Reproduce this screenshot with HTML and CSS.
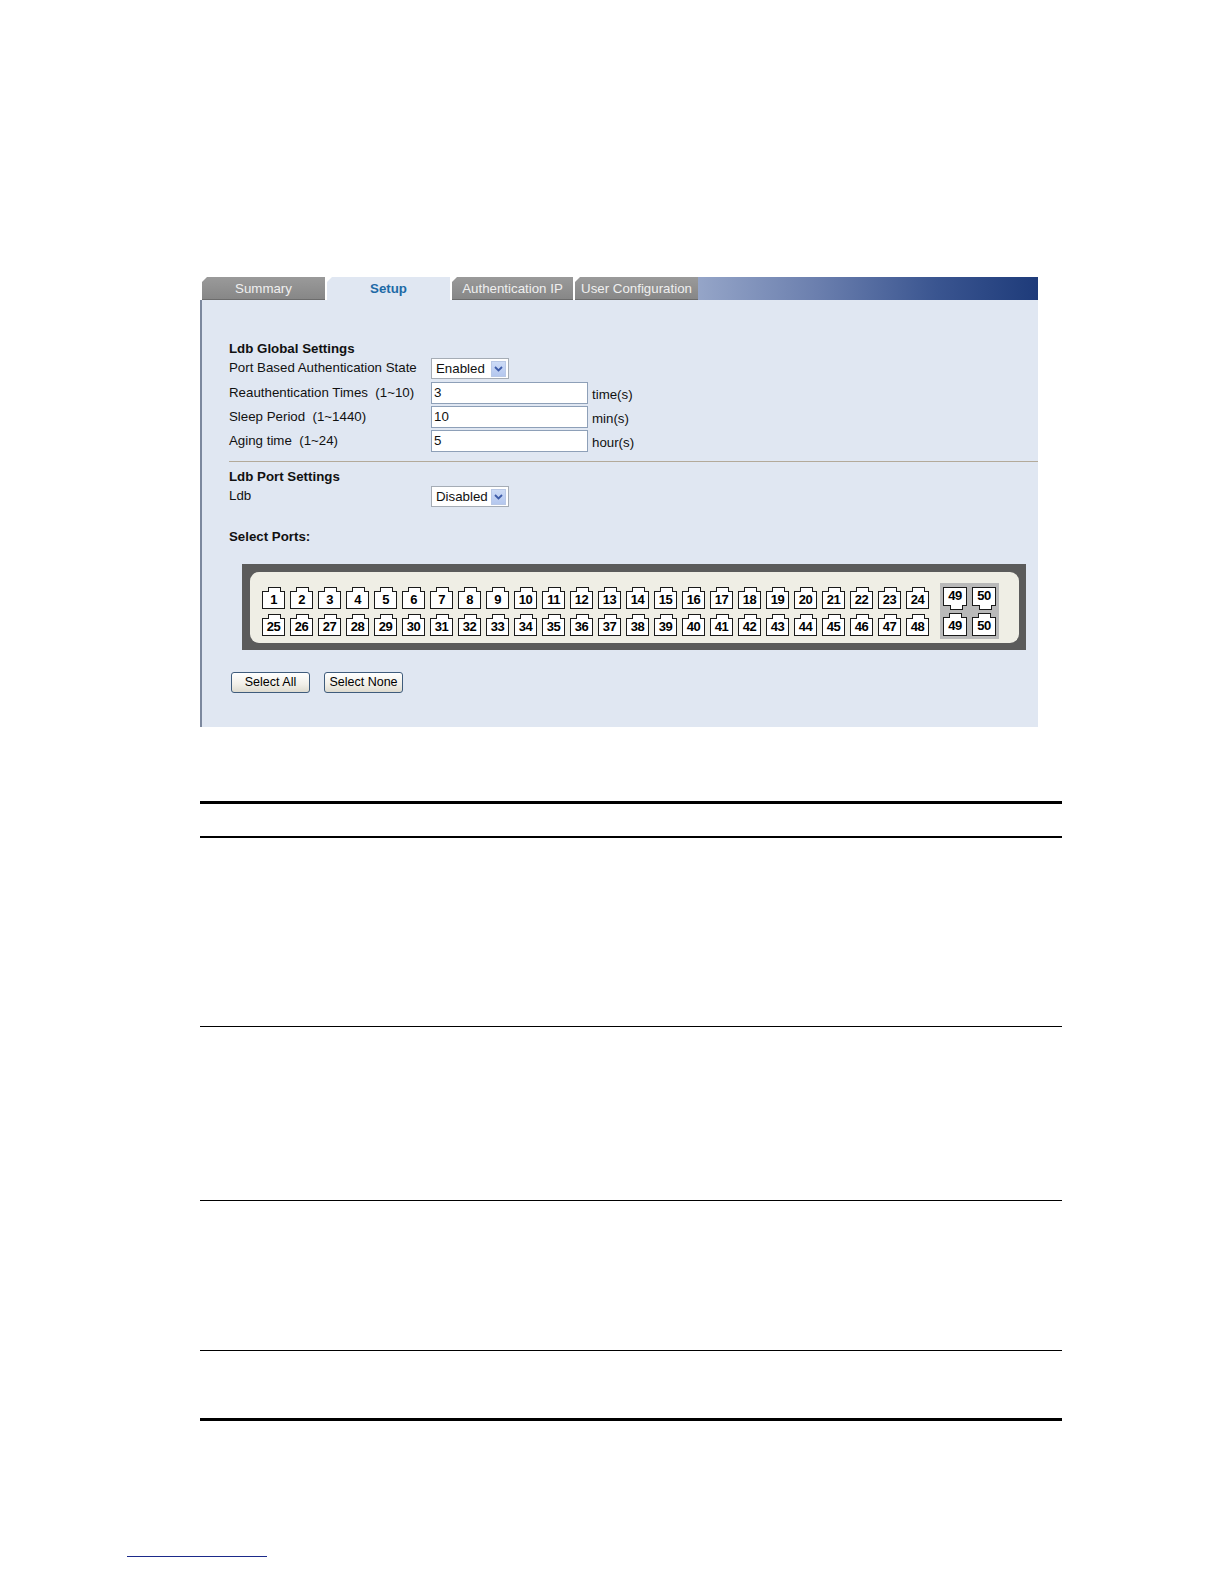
FILE: index.html
```html
<!DOCTYPE html>
<html>
<head>
<meta charset="utf-8">
<title>Ldb Setup</title>
<link rel="stylesheet" href="styles.css">
</head>
<body>
<div class="page">
  <div class="panel">
    <div class="tabbar">
      <div class="tab">Summary</div>
      <div class="tab active">Setup</div>
      <div class="tab">Authentication IP</div>
      <div class="tab">User Configuration</div>
      <div class="tab-fill"></div>
    </div>
    <div class="body">
      <div class="section-title">Ldb Global Settings</div>
      <div class="form">
        <div class="label row-sel">Port Based Authentication State</div>
        <div class="ctrl row-sel"><div class="select"><span class="sel-text">Enabled</span><span class="sel-btn"><svg width="9" height="6" viewBox="0 0 9 6"><path d="M1 1 L4.5 4.5 L8 1" fill="none" stroke="#3d5ba8" stroke-width="1.8"/></svg></span></div></div>
        <div class="unit row-sel"></div>

        <div class="label">Reauthentication Times&nbsp;&nbsp;(1~10)</div>
        <div class="ctrl"><div class="input">3</div></div>
        <div class="unit">time(s)</div>

        <div class="label">Sleep Period&nbsp;&nbsp;(1~1440)</div>
        <div class="ctrl"><div class="input">10</div></div>
        <div class="unit">min(s)</div>

        <div class="label">Aging time&nbsp;&nbsp;(1~24)</div>
        <div class="ctrl"><div class="input">5</div></div>
        <div class="unit">hour(s)</div>
      </div>
      <div class="separator"></div>
      <div class="section-title second">Ldb Port Settings</div>
      <div class="form">
        <div class="label row-sel">Ldb</div>
        <div class="ctrl row-sel"><div class="select"><span class="sel-text">Disabled</span><span class="sel-btn"><svg width="9" height="6" viewBox="0 0 9 6"><path d="M1 1 L4.5 4.5 L8 1" fill="none" stroke="#3d5ba8" stroke-width="1.8"/></svg></span></div></div>
        <div class="unit row-sel"></div>
      </div>
      <div class="section-title third">Select Ports:</div>
      <div class="switch">
        <div class="switch-inner">
          <div class="ports-main">
            <div class="port-row">
              <div class="port">1</div><div class="port">2</div><div class="port">3</div><div class="port">4</div><div class="port">5</div><div class="port">6</div><div class="port">7</div><div class="port">8</div><div class="port">9</div><div class="port">10</div><div class="port">11</div><div class="port">12</div><div class="port">13</div><div class="port">14</div><div class="port">15</div><div class="port">16</div><div class="port">17</div><div class="port">18</div><div class="port">19</div><div class="port">20</div><div class="port">21</div><div class="port">22</div><div class="port">23</div><div class="port">24</div>
            </div>
            <div class="port-row">
              <div class="port">25</div><div class="port">26</div><div class="port">27</div><div class="port">28</div><div class="port">29</div><div class="port">30</div><div class="port">31</div><div class="port">32</div><div class="port">33</div><div class="port">34</div><div class="port">35</div><div class="port">36</div><div class="port">37</div><div class="port">38</div><div class="port">39</div><div class="port">40</div><div class="port">41</div><div class="port">42</div><div class="port">43</div><div class="port">44</div><div class="port">45</div><div class="port">46</div><div class="port">47</div><div class="port">48</div>
            </div>
          </div>
          <div class="ports-combo">
            <div class="port-row">
              <div class="port big flip">49</div><div class="port big flip">50</div>
            </div>
            <div class="port-row">
              <div class="port big">49</div><div class="port big">50</div>
            </div>
          </div>
        </div>
      </div>
      <div class="buttons">
        <div class="btn">Select All</div>
        <div class="btn">Select None</div>
      </div>
    </div>
  </div>

  <div class="doc-table">
    <div class="doc-head"></div>
    <div class="doc-row r1"></div>
    <div class="doc-row r2"></div>
    <div class="doc-row r3"></div>
    <div class="doc-row r4 last"></div>
  </div>

  <div class="footnote-rule"></div>
</div>
</body>
</html>
```

FILE: styles.css
```css
html, body {
  margin: 0;
  padding: 0;
  background: #ffffff;
}

.page {
  position: relative;
  padding-top: 277px;
  height: 1307px;
  font-family: "Liberation Sans", Arial, sans-serif;
}

.panel {
  margin-left: 200px;
  width: 838px;
}

/* Tabs */
.tabbar {
  display: flex;
  height: 23px;
  padding-left: 2px;
  background: #ffffff;
}

.tab {
  width: 123px;
  margin-right: 2px;
  height: 23px;
  box-sizing: border-box;
  background: linear-gradient(#9a9a9a, #878787);
  color: #efefef;
  font-size: 13.3px;
  line-height: 23px;
  text-align: center;
  clip-path: polygon(0 5px, 5px 0, 100% 0, 100% 100%, 0 100%);
  border-bottom: 1px solid #6c6c6c;
}

.tab.active {
  background: #e0e7f2;
  color: #1d6aa6;
  font-weight: bold;
  border-bottom: 0;
}

.tab:nth-child(3) { width: 121px; }

.tab:nth-child(4) {
  width: 123px;
  margin-right: 0;
}

.tab-fill {
  flex: 1;
  height: 23px;
  background: linear-gradient(90deg, #95a5c8 0%, #6b7fae 35%, #3a5590 70%, #1e3b7a 100%);
}

/* Body */
.body {
  box-sizing: border-box;
  height: 427px;
  background: #e0e7f2;
  border-left: 2px solid #7c889e;
  padding-left: 27px;
  padding-top: 41px;
  font-size: 13.3px;
  color: #111;
}

.section-title {
  font-weight: bold;
  font-size: 13.3px;
  line-height: 16px;
  height: 16px;
  color: #111;
}

.section-title.second { margin-top: 7px; }
.section-title.third { margin-top: 20px; }

.form {
  display: grid;
  grid-template-columns: 202px 161px auto;
  grid-auto-rows: 24px;
}

.form .row-sel { height: 23px; }

.label {
  line-height: 24px;
  white-space: nowrap;
}

.label.row-sel { line-height: 22px; }

.ctrl { padding-top: 1px; }

.select {
  box-sizing: border-box;
  width: 78px;
  height: 21px;
  background: #fff;
  border: 1px solid #a5acb5;
  display: flex;
  align-items: center;
  justify-content: space-between;
  padding-left: 4px;
  padding-right: 2px;
}

.sel-text { font-size: 13.3px; line-height: 17px; }

.sel-btn {
  width: 15px;
  height: 16px;
  background: linear-gradient(#cddbf6, #b4c7ee);
  border: 1px solid #b9c8e6;
  box-sizing: border-box;
  display: flex;
  align-items: center;
  justify-content: center;
}

.input {
  box-sizing: border-box;
  width: 157px;
  height: 22px;
  background: #fff;
  border: 1px solid #8ea0b8;
  padding-left: 2px;
  line-height: 20px;
  font-size: 13.3px;
}

.unit {
  line-height: 13px;
  padding-top: 7px;
  padding-left: 0;
}

.separator {
  height: 1px;
  background: #b3aa9a;
  margin-top: 8px;
  margin-right: 0;
}

/* Switch front */
.switch {
  margin-top: 19px;
  margin-left: 13px;
  width: 784px;
  box-sizing: border-box;
  background: #5b5b5b;
  padding: 8px 7px 7px 8px;
}

.switch-inner {
  background: #efeee5;
  border-radius: 9px;
  padding: 15px 0 7px 12px;
  display: flex;
  align-items: flex-start;
  height: 49px;
}

.ports-main {
  display: flex;
  flex-direction: column;
  gap: 5px;
}

.port-row {
  display: flex;
  gap: 5px;
}

.port {
  position: relative;
  box-sizing: border-box;
  width: 23px;
  height: 18px;
  margin-top: 4px;
  border: 1px solid #1a1a1a;
  background: #fff;
  font-weight: bold;
  font-size: 13px;
  line-height: 16px;
  text-align: center;
  color: #000;
  letter-spacing: -0.6px;
}

.port::before {
  content: "";
  position: absolute;
  left: 5px;
  top: -5px;
  width: 11px;
  height: 4px;
  border: 1px solid #1a1a1a;
  border-bottom: 0;
  background: #fff;
}

.port.big {
  width: 24px;
  height: 19px;
}

.port.flip {
  margin-top: 0;
  margin-bottom: 3px;
  line-height: 15px;
}

.port.flip::before {
  top: auto;
  bottom: -5px;
  left: 6px;
  border-bottom: 1px solid #1a1a1a;
  border-top: 0;
}

.ports-combo {
  margin-left: 11px;
  margin-top: -4px;
  width: 59px;
  height: 56px;
  box-sizing: border-box;
  background: #b9b9b9;
  padding: 4px 3px 3px 3px;
  display: flex;
  flex-direction: column;
  gap: 4px;
}

/* Buttons */
.buttons {
  display: flex;
  gap: 14px;
  margin-top: 22px;
  margin-left: 2px;
}

.btn {
  box-sizing: border-box;
  width: 79px;
  height: 21px;
  border: 1px solid #3f5c7c;
  border-radius: 3px;
  background: linear-gradient(#ffffff, #f1efe8 60%, #dedbd0);
  font-size: 12.5px;
  line-height: 19px;
  text-align: center;
  color: #000;
}

/* Document table */
.doc-table {
  margin-top: 74px;
  margin-left: 200px;
  width: 862px;
  border-top: 3px solid #000;
}

.doc-head {
  height: 32px;
  border-bottom: 2px solid #000;
}

.doc-row {
  border-bottom: 1px solid #000;
}

.doc-row.r1 { height: 188px; }
.doc-row.r2 { height: 173px; }
.doc-row.r3 { height: 149px; }
.doc-row.r4 { height: 67px; }

.doc-row.last {
  border-bottom: 3px solid #000;
}

.footnote-rule {
  margin-top: 135px;
  margin-left: 127px;
  width: 140px;
  height: 1px;
  background: #1b2a8a;
}
```
